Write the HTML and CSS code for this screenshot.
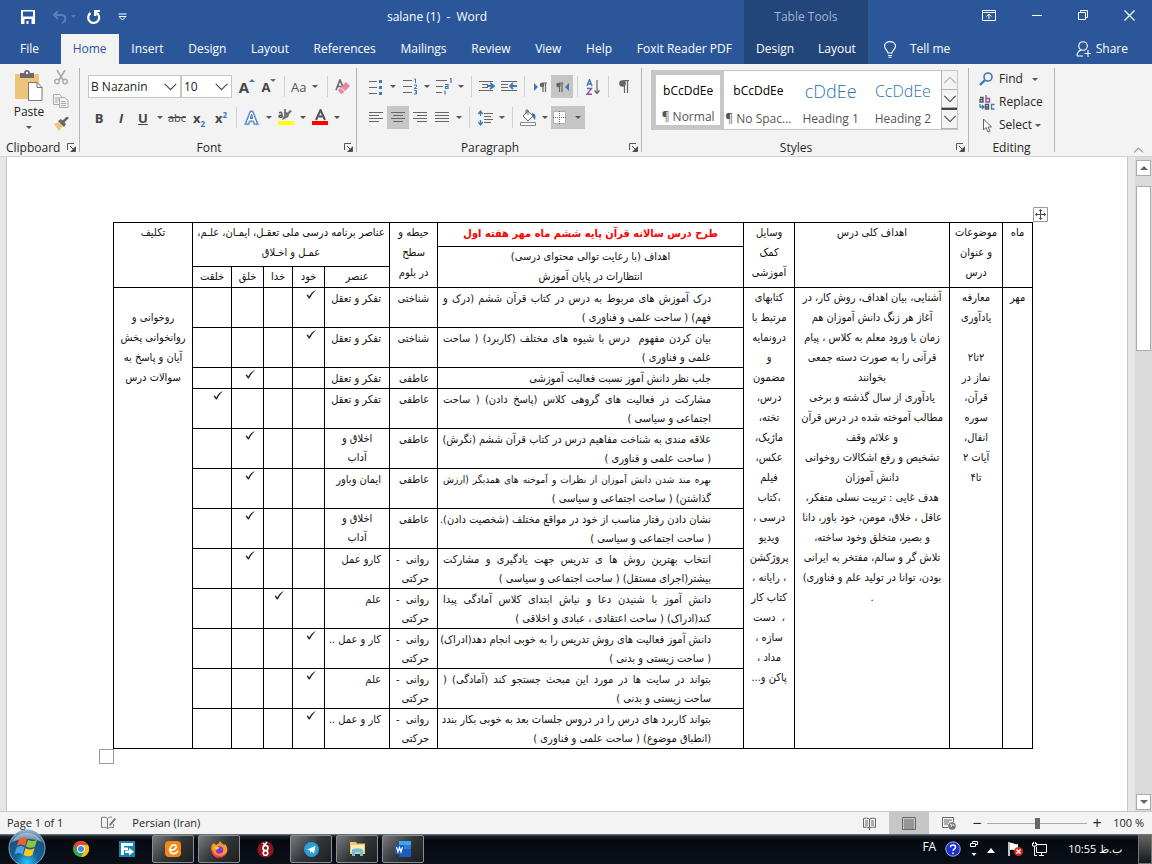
FILE: index.html
```html
<!DOCTYPE html>
<html lang="en">
<head>
<meta charset="utf-8">
<title>salane (1) - Word</title>
<link rel="stylesheet" href="styles.css">
</head>
<body>
<svg class="defs" aria-hidden="true">
  <symbol id="launch" viewBox="0 0 9 9"><path d="M.5 7V.5H7M3 3l4 4M8.500 3.500v5h-5" fill="none" stroke="#555"/><path d="M8 4v4H4z" fill="#444"/></symbol>
  <symbol id="chev" viewBox="0 0 16 9"><path d="M1.500 1L8 7.500 14.500 1" fill="none" stroke="#444" stroke-width="1.200"/></symbol>
  <symbol id="check" viewBox="0 0 10 9"><path d="M.5 5l1.300-.6 1.500 2.100C4.800 3.800 6.500 1.700 9.300.3L9.500.7C7.200 2.600 5.500 5 4 8.200L2.900 8.400z" fill="#222"/></symbol>
</svg>

<header class="top">
  <div class="quick">
    <div class="qat">
      <button aria-label="Save"><svg width="14" height="14" viewBox="0 0 14 14"><path d="M0 0h14v14H0zM2 1.500v5h10v-5zM3.500 9v5h2v-3h2v3h3V9z" fill="#fff" fill-rule="evenodd"/></svg></button>
      <button aria-label="Undo"><svg width="25" height="14" viewBox="0 0 25 14"><path d="M6 1L2 5l4 4M2.500 5H9c5 0 6 6 1 8" fill="none" stroke="#5b7fb8" stroke-width="2"/><path d="M19 5h5l-2.500 3z" fill="#5b7fb8"/></svg></button>
      <button aria-label="Repeat"><svg width="15" height="15" viewBox="0 0 15 15"><path d="M4.500 3A5.500 5.500 0 1 0 10 2.500" fill="none" stroke="#fff" stroke-width="2.200"/><path d="M8 0h6v2h-3.500v4H8z" fill="#fff"/></svg></button>
      <button aria-label="Customize"><svg width="9" height="8" viewBox="0 0 9 8"><path d="M.5 1h8M1 3.500h7L4.500 7z" fill="none" stroke="#fff"/></svg></button>
    </div>
    <div class="title">salane (1)&nbsp; -&nbsp; Word</div>
  </div>
  <div class="ctx ctx-title">Table Tools</div>
  <div class="wins">
    <button aria-label="Ribbon options"><svg width="14" height="11" viewBox="0 0 14 11"><path d="M.5.5h13v10H.5zM.5 2.500h13M7 9V4M4.500 6.500L7 4l2.500 2.500" fill="none" stroke="#fff"/></svg></button>
    <button aria-label="Minimize"><svg width="10" height="11" viewBox="0 0 10 11"><path d="M0 5.500h10" stroke="#fff"/></svg></button>
    <button aria-label="Restore"><svg width="10" height="10" viewBox="0 0 10 10"><path d="M.5 2.500h7v7h-7zM2.500 2.500v-2h7v7h-2" fill="none" stroke="#fff"/></svg></button>
    <button aria-label="Close"><svg width="11" height="11" viewBox="0 0 11 11"><path d="M.5.5l10 10M10.500.5l-10 10" stroke="#fff" stroke-width="1.200"/></svg></button>
  </div>
  <nav class="tabs">
    <button class="file">File</button><button class="on">Home</button><button>Insert</button><button>Design</button><button>Layout</button><button>References</button><button>Mailings</button><button>Review</button><button>View</button><button>Help</button><button>Foxit Reader PDF</button>
  </nav>
  <nav class="ctx ctx-tabs"><button>Design</button><button>Layout</button></nav>
  <div class="tell">
    <button><svg width="12" height="17" viewBox="0 0 12 17"><path d="M4 12c0-2.500-3.500-3.500-3.500-7C.5 2.500 3 .6 6 .6s5.500 1.900 5.500 4.400c0 3.500-3.500 4.500-3.500 7zM4 14.500h4M4.500 16.300h3" fill="none" stroke="#fff" stroke-width="1.100"/></svg>Tell me</button>
    <button><svg width="16" height="16" viewBox="0 0 16 16"><circle cx="7" cy="5" r="4.300" fill="none" stroke="#fff" stroke-width="1.100"/><path d="M1 15c0-3 1.500-5 4-6M1 15h6M12 9v7M8.500 12.500H15" fill="none" stroke="#fff" stroke-width="1.100"/></svg>Share</button>
  </div>
</header>

<section class="ribbon">
  <div class="group g-clip">
    <div class="body">
      <button class="paste"><svg width="30" height="32" viewBox="0 0 30 32"><path d="M1 4h24v25H1z" fill="#ecc57b"/><path d="M6 3h4c0-4 6-4 6 0h4v5H6z" fill="#6a6a6a"/><circle cx="13" cy="3" r="1.200" fill="#f3f3f3"/><path d="M14.500 12.500h8.500l5 5v13H14.500z" fill="#fff" stroke="#777"/><path d="M23 12.500v5h5" fill="none" stroke="#777"/></svg><span>Paste</span><i class="tri"></i></button>
      <div class="stack">
        <button aria-label="Cut"><svg width="14" height="15" viewBox="0 0 14 15"><path d="M3 0l6 10M11 0L5 10" stroke="#aaa" stroke-width="1.700"/><circle cx="3" cy="11.500" r="2.300" fill="none" stroke="#aaa" stroke-width="1.400"/><circle cx="11" cy="11.500" r="2.300" fill="none" stroke="#aaa" stroke-width="1.400"/></svg></button>
        <button aria-label="Copy"><svg width="16" height="14" viewBox="0 0 16 14"><g fill="#f3f3f3" stroke="#aaa"><path d="M.5.5h6l2 2v8h-8z"/><path d="M6.500 3.500h5.500l3 3v7H6.500z"/></g><path d="M2 4h4M2 6h4M2 8h3M8 7.500h4M8 9.500h5M8 11.500h5" stroke="#aaa"/></svg></button>
        <button aria-label="Format Painter"><svg width="16" height="14" viewBox="0 0 16 14"><path d="M1 7l5-2 4 4-4 5z" fill="#ecc57b"/><path d="M5 4l3-2 5 5-2 3z" fill="#666"/><path d="M10 5l5-5" stroke="#666" stroke-width="2.500"/></svg></button>
      </div>
    </div>
    <div class="cap"><span>Clipboard</span><svg width="9" height="9"><use href="#launch"/></svg></div>
  </div>

  <div class="group g-font">
    <div class="body rows">
      <div class="row">
        <div class="combo wide"><select aria-label="Font"><option>B Nazanin</option></select><svg width="15" height="8"><use href="#chev"/></svg></div>
        <div class="combo"><select aria-label="Font size"><option>10</option></select><svg width="15" height="8"><use href="#chev"/></svg></div>
        <button class="ib glyph" aria-label="Grow font"><b class="big">A</b><i class="up"></i></button>
        <button class="ib glyph" aria-label="Shrink font"><b>A</b><i class="dn"></i></button>
        <i class="sep"></i>
        <button class="case">Aa<i class="tri"></i></button>
        <i class="sep"></i>
        <button class="ib" aria-label="Clear formatting"><svg width="16" height="16" viewBox="0 0 16 16"><path d="M1 11L5 1l4 9M2.500 7.500h5" fill="none" stroke="#666" stroke-width="1.600"/><path d="M11 3l4 4-5 5-4-4z" fill="#e8889c"/><path d="M5.300 8.700l4 4-2 2H6l-2.700-2.700V10.700z" fill="#e8889c"/></svg></button>
      </div>
      <div class="row">
        <button class="ib glyph"><b>B</b></button>
        <button class="ib glyph it"><b>I</b></button>
        <button class="ib glyph"><b><u>U</u></b></button><i class="tri"></i>
        <button class="ib glyph st"><s>abc</s></button>
        <button class="ib glyph"><b>x<sub>2</sub></b></button>
        <button class="ib glyph"><b>x<sup>2</sup></b></button>
        <i class="sep"></i>
        <button class="ib" aria-label="Text effects"><svg width="16" height="16" viewBox="0 0 16 16"><path d="M1.500 14L6.500 1.500h2l5 12.500h-3L9.500 11H5.500l-1 3zM6.300 8.500h2.500L7.500 4.500z" fill="#fff" fill-rule="evenodd" stroke="#9cc0e6" stroke-width="2.600"/><path d="M1.500 14L6.500 1.500h2l5 12.500h-3L9.500 11H5.500l-1 3zM6.300 8.500h2.500L7.500 4.500z" fill="#fff" fill-rule="evenodd" stroke="#3d78ba"/></svg></button><i class="tri"></i>
        <button class="ib" aria-label="Highlight"><svg width="18" height="17" viewBox="0 0 18 17"><path d="M2 4c3-2 3 0 3 4-4 1-4-2 0-2M8 0v8c4 1 4-5 0-4" fill="none" stroke="#555" stroke-width="1.500"/><path d="M15 2L8 10l-3 1 1-3 7-7z" fill="#777"/><path d="M1 12h16v4H1z" fill="#ff0"/></svg></button><i class="tri"></i>
        <button class="ib" aria-label="Font color"><svg width="17" height="17" viewBox="0 0 17 17"><path d="M4 11L8.500 1 13 11M5.500 7.500h6" fill="none" stroke="#555" stroke-width="2"/><path d="M0 12h16v4H0z" fill="#f00"/></svg></button><i class="tri"></i>
      </div>
    </div>
    <div class="cap"><span>Font</span><svg width="9" height="9"><use href="#launch"/></svg></div>
  </div>

  <div class="group g-para">
    <div class="body rows">
      <div class="row">
        <button class="ib" aria-label="Bullets"><svg width="14" height="16" viewBox="0 0 14 16"><path d="M0 2.500h8M0 8.500h8M0 14.500h8" stroke="#666"/><path d="M10 1h3v3h-3zM10 7h3v3h-3zM10 13h3v3h-3z" fill="#3d78ba"/></svg></button><i class="tri"></i>
        <button class="ib" aria-label="Numbering"><svg width="15" height="17" viewBox="0 0 15 17"><path d="M0 2.500h9M0 8.500h9M0 14.500h9" stroke="#666"/><path d="M11 1h1.500v4M11 7h2.500v1.500L11 10.500h3M11 12.500h2.500v3.500H11M12 14.300h1.500" fill="none" stroke="#3d78ba"/></svg></button><i class="tri"></i>
        <button class="ib" aria-label="Multilevel list"><svg width="17" height="17" viewBox="0 0 17 17"><path d="M0 2.500h11M0 8.500h7M0 14.500h6" stroke="#666"/><path d="M14 0.500h1V5M9 6.500h3v4H9.500v-2H12M9 12.500v4" fill="none" stroke="#3d78ba" stroke-width="1.200"/></svg></button><i class="tri"></i>
        <i class="sep"></i>
        <button class="ib" aria-label="Decrease indent"><svg width="16" height="13" viewBox="0 0 16 13"><path d="M0 1.500h14M3 4.500h6M3 7.500h6M0 10.500h14" stroke="#666"/><path d="M8 6h6M11 3l4 3-4 3" fill="none" stroke="#3d78ba" stroke-width="1.800"/></svg></button>
        <button class="ib" aria-label="Increase indent"><svg width="16" height="13" viewBox="0 0 16 13"><path d="M0 1.500h16M0 4.500h7M0 7.500h7M0 10.500h16" stroke="#666"/><path d="M9 6h7M12 3L9 6l3 3" fill="none" stroke="#3d78ba" stroke-width="1.800"/></svg></button>
        <i class="sep"></i>
        <button class="ib" aria-label="Left to right"><svg width="13" height="10" viewBox="0 0 13 10"><path d="M0 1l4 4-4 4z" fill="#3d78ba"/><path d="M9 1v9M11.500 1v9M8 1h5" stroke="#666" stroke-width="1.200"/><circle cx="8" cy="3" r="2.300" fill="#666"/></svg></button>
        <button class="ib sel" aria-label="Right to left"><svg width="13" height="10" viewBox="0 0 13 10"><path d="M13 1L9 5l4 4z" fill="#3d78ba"/><path d="M3.500 1v9M6 1v9M3 1h4.500" stroke="#666" stroke-width="1.200"/><circle cx="2.500" cy="3" r="2.300" fill="#666"/></svg></button>
        <i class="sep"></i>
        <button class="ib" aria-label="Sort"><svg width="14" height="16" viewBox="0 0 14 16"><path d="M1 7l2.500-6.500L6 7M2 5h3" fill="none" stroke="#3d78ba" stroke-width="1.400"/><path d="M1 9.500h4.500L1 15.300h5" fill="none" stroke="#8a55a8" stroke-width="1.400"/><path d="M11 1v13M8.500 11.500L11 14.500l2.500-3" fill="none" stroke="#666" stroke-width="1.200"/></svg></button>
        <i class="sep"></i>
        <button class="ib" aria-label="Show marks"><svg width="10" height="13" viewBox="0 0 10 13"><path d="M5.500 0v13M8.500 0v13M4 .6h6" stroke="#666" stroke-width="1.200"/><circle cx="3.500" cy="3.500" r="3.300" fill="#666"/></svg></button>
      </div>
      <div class="row">
        <button class="ib" aria-label="Align left"><svg width="14" height="11" viewBox="0 0 14 11"><path d="M0 .5h14M0 3.500h10M0 6.500h14M0 9.500h10" stroke="#666"/></svg></button>
        <button class="ib sel" aria-label="Center"><svg width="14" height="11" viewBox="0 0 14 11"><path d="M0 .5h14M2 3.500h10M0 6.500h14M2 9.500h10" stroke="#666"/></svg></button>
        <button class="ib" aria-label="Align right"><svg width="14" height="11" viewBox="0 0 14 11"><path d="M0 .5h14M4 3.500h10M0 6.500h14M4 9.500h10" stroke="#666"/></svg></button>
        <button class="ib" aria-label="Justify"><svg width="14" height="11" viewBox="0 0 14 11"><path d="M0 .5h14M0 3.500h14M0 6.500h14M0 9.500h14" stroke="#666"/></svg></button><i class="tri"></i>
        <i class="sep"></i>
        <button class="ib" aria-label="Line spacing"><svg width="15" height="16" viewBox="0 0 15 16"><path d="M6 3.500h9M6 6.500h7M6 9.500h9M6 12.500h7" stroke="#666"/><path d="M2.500 1v5M2.500 15v-5M.3 4l2.200-3 2.200 3M.3 12l2.200 3 2.200-3" fill="none" stroke="#3d78ba" stroke-width="1.300"/></svg></button><i class="tri"></i>
        <i class="sep"></i>
        <button class="ib" aria-label="Shading"><svg width="17" height="17" viewBox="0 0 17 17"><path d="M3 7l5-5 5 5-5 5z" fill="#fff" stroke="#666"/><path d="M6 5V1h2v5" fill="none" stroke="#666"/><path d="M12 4c4 1 4 3 3 7-2-1-1-3-3-4z" fill="#3d78ba"/><path d="M.5 13.500h15v3H.5z" fill="#fff" stroke="#888"/></svg></button><i class="tri"></i>
        <button class="ib sel two" aria-label="Borders"><svg width="13" height="13" viewBox="0 0 13 13"><path d="M0 0h13v13H0z" fill="#fff"/><path d="M.5.5h12v12H.5zM6.500 0v13M0 6.500h13" fill="none" stroke="#666" stroke-dasharray="1 1"/></svg><i class="tri"></i></button>
      </div>
    </div>
    <div class="cap"><span>Paragraph</span><svg width="9" height="9"><use href="#launch"/></svg></div>
  </div>

  <div class="group g-style">
    <div class="gallery">
      <button class="st-item cur"><span class="demo">bCcDdEe</span><span>¶ Normal</span></button>
      <button class="st-item"><span class="demo">bCcDdEe</span><span>¶ No Spac...</span></button>
      <button class="st-item"><span class="demo h1">cDdEe</span><span>Heading 1</span></button>
      <button class="st-item"><span class="demo h2">CcDdEe</span><span>Heading 2</span></button>
      <div class="gscroll">
        <button class="dim" aria-label="Up"><svg class="flip" width="14" height="8"><use href="#chev"/></svg></button>
        <button aria-label="Down"><svg width="14" height="8"><use href="#chev"/></svg></button>
        <button class="more" aria-label="More"><svg width="14" height="8"><use href="#chev"/></svg></button>
      </div>
    </div>
    <div class="cap"><span>Styles</span><svg width="9" height="9"><use href="#launch"/></svg></div>
  </div>

  <div class="group g-edit">
    <div class="edits">
      <button><svg width="16" height="14" viewBox="0 0 16 14"><circle cx="9" cy="5" r="4" fill="none" stroke="#3d78ba" stroke-width="1.600"/><path d="M6 8l-5 5" stroke="#3d78ba" stroke-width="2.400"/></svg>Find<i class="tri wide"></i></button>
      <button><svg width="16" height="15" viewBox="0 0 16 15"><path d="M1 2.500h3V7H1V4.500h3M6.500 13V9.500h3V14h-3v-2h3" fill="none" stroke="#555" stroke-width="1.400"/><path d="M7 0v7h3.500V3.500H7" fill="none" stroke="#8a55a8" stroke-width="1.400"/><path d="M15.500 9.500h-3V14h3M1 9v3h4M3 10l2 2-2 2" fill="none" stroke="#3d78ba" stroke-width="1.300"/></svg>Replace</button>
      <button><svg width="16" height="15" viewBox="0 0 16 15"><path d="M4.500 1v11l2.500-2.500 2 4.500 2-1-2-4h3.500z" fill="#fff" stroke="#666"/></svg>Select<i class="tri"></i></button>
    </div>
    <div class="cap"><span>Editing</span></div>
  </div>
  <button class="collapse" aria-label="Collapse"><svg class="flip" width="11" height="6"><use href="#chev"/></svg></button>
</section>

<main class="work">
  <div class="paper">
    <div class="sheet">
    <span class="handle"><svg width="15" height="15" viewBox="0 0 15 15"><path d="M.5.5h14v14H.5z" fill="#fff" stroke="#999"/><path d="M7.500 3v9M3 7.500h9" stroke="#444"/><path d="M5.500 4l2-2 2 2zM5.500 11l2 2 2-2zM4 5.500l-2 2 2 2zM11 5.500l2 2-2 2z" fill="#444"/></svg></span>
    <table dir="rtl" lang="fa">
      <colgroup><col class="c30"><col class="c53"><col class="c155"><col class="c51"><col class="c306"><col class="c48"><col class="c65"><col class="c32"><col class="c29"><col class="c32"><col class="c39"><col class="c79"></colgroup>
      <tbody>
      <tr class="r24"><td rowspan="3">ماه</td><td rowspan="3">موضوعات<br>و عنوان<br>درس</td><td rowspan="3">اهداف کلی درس</td><td rowspan="3">وسایل<br>کمک<br>آموزشی</td><th>طرح درس سالانه قرآن پایه ششم ماه مهر هفته اول</th><td rowspan="3">حیطه و<br>سطح<br>در بلوم</td><td rowspan="2" colspan="5">عناصر برنامه درسی ملی تعقـل، ایمـان، علـم،<br>عمـل و اخـلاق</td><td rowspan="3">تکلیف</td></tr>
      <tr class="r20"><td rowspan="2">اهداف (با رعایت توالی محتوای درسی)<br>انتظارات در پایان آموزش</td></tr>
      <tr class="r20"><td>عنصر</td><td>خود</td><td>خدا</td><td>خلق</td><td>خلقت</td></tr>
      <tr><td rowspan="12">مهر</td>
        <td rowspan="12">معارفه<br>یادآوری<br><br>۲تا۲<br>نماز در<br>قرآن،<br>سوره<br>انفال،<br>آیات ۲<br>تا۴</td>
        <td rowspan="12">آشنایی، بیان اهداف، روش کار، در<br>آغاز هر زنگ دانش آموزان هم<br>زمان با ورود معلم به کلاس ، پیام<br>قرآنی را به صورت دسته جمعی<br>بخوانند<br>یادآوری از سال گذشته و برخی<br>مطالب آموخته شده در درس قرآن<br>و علائم وقف<br>تشخیص و رفع اشکالات روخوانی<br>دانش آموزان<br>هدف غایی : تربیت نسلی متفکر،<br>عاقل ، خلاق، مومن، خود باور، دانا<br>و بصیر، متخلق وخود ساخته،<br>تلاش گر و سالم، مفتخر به ایرانی<br>بودن، توانا در تولید علم و فناوری)<br>.</td>
        <td rowspan="12">کتابهای<br>مرتبط با<br>درونمایه<br>و<br>مضمون<br>درس،<br>تخته،<br>ماژیک،<br>عکس،<br>فیلم<br>،کتاب<br>درسی ،<br>ویدیو<br>پروژکشن<br>، رایانه ،<br>کتاب کار<br>، &nbsp;دست<br>سازه ،<br>مداد ،<br>پاکن و...</td>
        <td class="obj"><p class="full">درک آموزش های مربوط به درس در کتاب قرآن ششم (درک و</p><p>فهم) ( ساحت علمی و فناوری )</p></td><td class="dom">شناختی</td><td class="el">تفکر و تعقل</td><td class="ck"><svg><use href="#check"/></svg></td><td></td><td></td><td></td>
        <td rowspan="12"><br>روخوانی و<br>روانخوانی پخش<br>آیان و پاسخ به<br>سوالات درس</td></tr>
      <tr><td class="obj"><p class="full">بیان کردن مفهوم &nbsp;درس با شیوه های مختلف (کاربرد) ( ساحت</p><p>علمی و فناوری )</p></td><td class="dom">شناختی</td><td class="el">تفکر و تعقل</td><td class="ck"><svg><use href="#check"/></svg></td><td></td><td></td><td></td></tr>
      <tr class="r20"><td class="obj"><p>جلب نظر دانش آموز نسبت فعالیت آموزشی</p></td><td class="dom">عاطفی</td><td class="el">تفکر و تعقل</td><td></td><td></td><td class="ck"><svg><use href="#check"/></svg></td><td></td></tr>
      <tr><td class="obj"><p class="full">مشارکت در فعالیت های گروهی کلاس (پاسخ دادن) ( ساحت</p><p>اجتماعی و سیاسی )</p></td><td class="dom">عاطفی</td><td class="el">تفکر و تعقل</td><td></td><td></td><td></td><td class="ck"><svg><use href="#check"/></svg></td></tr>
      <tr><td class="obj"><p class="full">علاقه مندی به شناخت مفاهیم درس در کتاب قرآن ششم (نگرش)</p><p>( ساحت علمی و فناوری )</p></td><td class="dom">عاطفی</td><td class="pair">اخلاق و<br>آداب</td><td></td><td></td><td class="ck"><svg><use href="#check"/></svg></td><td></td></tr>
      <tr><td class="obj"><p class="full long">بهره مند شدن دانش آموزان از نظرات و آموخته های همدیگر (ارزش</p><p>گذاشتن) ( ساحت اجتماعی و سیاسی )</p></td><td class="dom">عاطفی</td><td class="el">ایمان وباور</td><td></td><td></td><td class="ck"><svg><use href="#check"/></svg></td><td></td></tr>
      <tr><td class="obj"><p class="full">نشان دادن رفتار مناسب از خود در مواقع مختلف (شخصیت دادن).</p><p>( ساحت اجتماعی و سیاسی )</p></td><td class="dom">عاطفی</td><td class="pair">اخلاق و<br>آداب</td><td></td><td></td><td class="ck"><svg><use href="#check"/></svg></td><td></td></tr>
      <tr><td class="obj"><p class="full">انتخاب بهترین روش ها ی تدریس جهت یادگیری و مشارکت</p><p>بیشتر(اجرای مستقل) ( ساحت اجتماعی و سیاسی )</p></td><td class="dom"><p class="full">روانی -</p><p>حرکتی</p></td><td class="el">کارو عمل</td><td></td><td></td><td class="ck"><svg><use href="#check"/></svg></td><td></td></tr>
      <tr><td class="obj"><p class="full">دانش آموز با شنیدن دعا و نیاش ابتدای کلاس آمادگی پیدا</p><p>کند(ادراک) ( ساحت اعتقادی ، عبادی و اخلاقی )</p></td><td class="dom"><p class="full">روانی -</p><p>حرکتی</p></td><td class="el">علم</td><td></td><td class="ck"><svg><use href="#check"/></svg></td><td></td><td></td></tr>
      <tr><td class="obj"><p class="full">دانش آموز فعالیت های روش تدریس را به خوبی انجام دهد(ادراک)</p><p>( ساحت زیستی و بدنی )</p></td><td class="dom"><p class="full">روانی -</p><p>حرکتی</p></td><td class="el">کار و عمل ..</td><td class="ck"><svg><use href="#check"/></svg></td><td></td><td></td><td></td></tr>
      <tr><td class="obj"><p class="full">بتواند در سایت ها در مورد این مبحث جستجو کند (آمادگی) (</p><p>ساحت زیستی و بدنی )</p></td><td class="dom"><p class="full">روانی -</p><p>حرکتی</p></td><td class="el">علم</td><td class="ck"><svg><use href="#check"/></svg></td><td></td><td></td><td></td></tr>
      <tr><td class="obj"><p class="full">بتواند کاربرد های درس را در دروس جلسات بعد به خوبی بکار بندد</p><p>(انطباق موضوع) ( ساحت علمی و فناوری )</p></td><td class="dom"><p class="full">روانی -</p><p>حرکتی</p></td><td class="el">کار و عمل ..</td><td class="ck"><svg><use href="#check"/></svg></td><td></td><td></td><td></td></tr>
      </tbody>
    </table>
    <span class="corner"></span>
    </div>
  </div>
  <div class="vbar"><button aria-label="Scroll up"><i class="aup"></i></button><div class="thumb"></div><button aria-label="Scroll down"><i class="adn"></i></button></div>
</main>

<div class="status">
  <span>Page 1 of 1</span>
  <svg width="16" height="14" viewBox="0 0 16 14"><path d="M6.500 12.500C5 11 3 11 .5 11.500V1.500C3 1 5 1 6.500 2.500zM6.500 12.500c1-1 3-1.500 6-1V8M6.500 2.500C7.500 1.500 9 1 11 1" fill="none" stroke="#777"/><path d="M8.500 8l5-6 1.500 1.200-5 6-2 .8z" fill="#777"/></svg>
  <span>Persian (Iran)</span>
  <div class="views">
    <button aria-label="Read mode"><svg width="13" height="13" viewBox="0 0 13 13"><path d="M.5 1.500c2-.6 4-.4 6 .5 2-.9 4-1.100 6-.5v9c-2-.6-4-.4-6 .5-2-.9-4-1.100-6-.5zM6.500 2v11M2 4h3M2 6h3M2 8h3M8 4h3M8 6h3M8 8h3" fill="none" stroke="#666"/></svg></button>
    <button class="sel" aria-label="Print layout"><svg width="14" height="13" viewBox="0 0 14 13"><path d="M.5.500h13v12H.5zM2 3h10M2 5h10M2 7h10M2 9h10M2 11h10" fill="none" stroke="#666"/></svg></button>
    <button aria-label="Web layout"><svg width="14" height="13" viewBox="0 0 14 13"><path d="M6 10.500H.5V.5h11V5M2 3h8M2 5h5M2 7h4" fill="none" stroke="#666"/><circle cx="10" cy="9" r="3.800" fill="#777"/><path d="M8 7l2 1-1 2M11 7l1 2" stroke="#f3f3f3" fill="none"/></svg></button>
  </div>
  <div class="zoom"><button aria-label="Zoom out">−</button><input type="range" min="0" max="200" value="100" aria-label="Zoom"><button aria-label="Zoom in">+</button><span>100 %</span></div>
</div>

<footer class="taskbar">
  <button class="orb" aria-label="Start"><svg width="38" height="36" viewBox="0 0 38 36"><defs><radialGradient id="og" cx=".5" cy=".9" r=".9"><stop offset="0" stop-color="#2cf"/><stop offset=".35" stop-color="#16649c"/><stop offset=".75" stop-color="#1f4f7c"/><stop offset="1" stop-color="#9cc3dc"/></radialGradient></defs><circle cx="19" cy="19" r="18" fill="url(#og)" stroke="#7fa8c0"/><path d="M4 13a16 14 0 0 1 30 0c-8-4-22-4-30 0z" fill="#fff" opacity=".4"/><path d="M11 10c3-2 5-2 8 0l-2 7c-3-2-5-2-8 0z" fill="#ee6030"/><path d="M20 10.500c3 2 6 2 9 0l-2 7c-3 2-6 1.500-9 0z" fill="#90c43c"/><path d="M8.500 18.500c3-2 5-2 8 0l-2 7c-3-2-5-2-8 0z" fill="#4aa0e8"/><path d="M17.500 19c3 2 6 2 9 0l-2 7c-3 2-6 1.500-9 0z" fill="#fcc81c"/></svg></button>
  <div class="apps">
    <button aria-label="Chrome"><svg width="16" height="16" viewBox="0 0 16 16"><circle cx="8" cy="8" r="8" fill="#34a853"/><path d="M1 4a8 8 0 0 1 14 0H8a4 4 0 0 0-3.500 6z" fill="#ea4335"/><path d="M15 4a8 8 0 0 1-7 12l3.500-6A4 4 0 0 0 8 4z" fill="#fbbc05"/><circle cx="8" cy="8" r="4" fill="#fff"/><circle cx="8" cy="8" r="3" fill="#4285f4"/></svg></button>
    <button aria-label="File transfer"><svg width="16" height="16" viewBox="0 0 16 16"><path d="M0 0h16v16H0z" fill="#0e86ba"/><path d="M2 2h12v3H5v1.500h4V9H5v5H2z" fill="#fff"/><path d="M6 9.500h4V7l5 3.800-5 3.700V12H6z" fill="#fff"/></svg></button>
    <button class="open" aria-label="Browser"><svg width="16" height="16" viewBox="0 0 16 16"><rect width="16" height="16" rx="4" fill="#f68712"/><path d="M4 9c6 1 9-3 6-5-3-1-6 3-5 6 1 4 6 3 8 0" fill="none" stroke="#fff" stroke-width="1.800"/></svg></button>
    <button class="open" aria-label="Firefox"><svg width="17" height="17" viewBox="0 0 17 17"><path d="M1 4l2-2 2 2c2-1 3-2 4-4 1 2 3 3 4 4l1-1c2 2 3 5 2 8a8 7 0 0 1-15 0C0 8 0 6 1 4z" fill="#ff9824"/><path d="M1 6a8 8 0 0 0 14 6c-2 7-13 6-14-1z" fill="#ff3b50"/><circle cx="8.500" cy="9" r="3.800" fill="#8438d8"/><path d="M3 6c2-1 4 0 6 1-2 0-2 1-4 2z" fill="#ffd43a"/></svg></button>
    <button aria-label="Reader"><svg width="17" height="17" viewBox="0 0 17 17"><circle cx="8.500" cy="8.500" r="8.200" fill="#8c1820"/><circle cx="8.500" cy="7" r="2.500" fill="none" stroke="#fff" stroke-width="1.600"/><circle cx="8.500" cy="12" r="2.300" fill="none" stroke="#fff" stroke-width="1.600"/><path d="M7 5l3-4M6 2l2 2" stroke="#fff" stroke-width="1.500"/></svg></button>
    <button class="open" aria-label="Telegram"><svg width="15" height="15" viewBox="0 0 15 15"><circle cx="7.500" cy="7.500" r="7.500" fill="#2a9fd8"/><path d="M3 7.500L11.500 4 10 11.500 7.500 9.500 6 11V8.500z" fill="#fff"/></svg></button>
    <button class="open" aria-label="Explorer"><svg width="17" height="16" viewBox="0 0 17 16"><path d="M1 1h6l1 1.500h8V13H1z" fill="#e8cc6c"/><path d="M2 4h13v7H2z" fill="#fbeeb0"/><path d="M3 15V9c0-2 11-2 11 0v6h-3v-4H6v4z" fill="#6cbce4"/></svg></button>
    <button class="open" aria-label="Word"><svg width="16" height="16" viewBox="0 0 16 16"><path d="M4 0h12v16H4z" fill="#1b5cbd"/><path d="M4 0h12v4H4z" fill="#41a5ee"/><path d="M4 4h12v4H4z" fill="#2b7cd3"/><path d="M0 4h9v9H0z" fill="#185abd"/><path d="M1.500 6l1.500 5 1.500-4.500L6 11l1.500-5" fill="none" stroke="#fff" stroke-width="1.200"/></svg></button>
  </div>
  <div class="tray">
    <span class="fa">FA</span>
    <svg width="16" height="16" viewBox="0 0 16 16"><circle cx="8" cy="8" r="7.200" fill="#1c2fd0" stroke="#aab4e8"/><path d="M5.500 6.200c0-3 5-3 5 0 0 2-2.500 1.800-2.500 3.800M8 11.500v1.500" fill="none" stroke="#fff" stroke-width="1.600"/></svg>
    <svg width="8" height="16" viewBox="0 0 8 16"><path d="M.5 2.500h5v3h-5zM2.500 2V.5h5v3H6" fill="none" stroke="#fff"/><path d="M1.500 12h5L4 15z" fill="#fff"/></svg>
    <svg width="8" height="8" viewBox="0 0 8 8"><path d="M0 8h8L4 3z" fill="#fff"/></svg>
    <svg class="flag" width="15" height="14" viewBox="0 0 15 14"><path d="M1 0v14" stroke="#fff" stroke-width="1.500"/><path d="M2 1c3-1 4 2 8 1v6c-4 1-5-1-8 0z" fill="#fff"/><circle cx="10.500" cy="9.500" r="4.500" fill="#d8281c"/><path d="M8.500 7.500l4 4M12.500 7.500l-4 4" stroke="#fff" stroke-width="1.400"/></svg>
    <svg width="15" height="14" viewBox="0 0 15 14"><path d="M5 2.500h9.500v8H4.500V5M7 13.500h5M9.500 11v2M.5 1v3h4V1M2.500 4v9.500H5M1.500 0v2M3.500 0v2" fill="none" stroke="#fff"/></svg>
    <span class="clock" dir="rtl" lang="fa">ب.ظ 10:55</span>
    <button class="desk" aria-label="Show desktop"></button>
  </div>
</footer>
</body>
</html>
```
FILE: styles.css
```css
* { box-sizing: border-box; }
body { margin: 0; min-height: 100vh; display: flex; flex-direction: column; font: 12px/16px "Open Sans", "Noto Sans", sans-serif; color: #262626; background: #e6e6e6; }
button { border: 0; padding: 0; margin: 0; background: none; font: inherit; color: inherit; display: flex; align-items: center; justify-content: center; }
svg { display: block; flex: none; }
.defs { position: absolute; width: 0; height: 0; }
p { margin: 0; }
.tri { flex: none; width: 12px; display: flex; justify-content: center; }
.tri::before { content: ""; border: 3px solid transparent; border-top-color: #555; border-bottom: 0; }

.top { display: grid; grid-template-columns: minmax(744px, auto) auto 1fr; grid-template-rows: 34px 30px; background: #2b579a; color: #fff; }
.quick { display: flex; align-items: center; }
.qat { display: flex; align-items: center; gap: 17px; width: 130px; padding-left: 21px; }
.title { flex: 1; text-align: center; }
.qat button:nth-child(3) { margin-left: -8px; }
.ctx { background: #22457a; }
.ctx-title { display: flex; align-items: center; justify-content: center; color: #a3b5d0; }
.ctx-tabs { display: flex; }
.wins { display: flex; justify-content: flex-end; align-items: center; padding: 0 17px 4px 0; gap: 36px; }
.tabs { display: flex; justify-content: space-between; }
.tabs button, .ctx-tabs button { padding: 0 12px; }
.tabs .file { padding: 0 21px 0 20px; }
.tabs .on { background: #f3f3f3; color: #2b579a; }
.tell { display: flex; justify-content: space-between; padding: 0 24px 0 16px; }
.tell button { gap: 14px; }
.tell button:last-child { gap: 4px; }

.ribbon { display: flex; height: 93px; background: #f3f3f3; border-bottom: 1px solid #d2d2d2; padding-top: 4px; }
.group { position: relative; display: flex; flex-direction: column; justify-content: space-between; border-right: 1px solid #b5b5b5; margin-bottom: 4px; padding: 0 8px; }
.g-clip { width: 80px; }
.g-font { width: 277px; }
.g-para { width: 285px; }
.g-style { width: 327px; }
.g-edit { width: 86px; }
.cap { display: flex; align-items: center; height: 9px; }
.cap span { flex: 1; text-align: center; padding-right: 14px; }
.cap svg { margin-right: -5px; }
.body { display: flex; }
.rows { flex-direction: column; gap: 8px; padding-top: 7px; }
.row { display: flex; align-items: center; height: 23px; }
.paste { flex-direction: column; width: 42px; }
.paste svg { margin-top: 2px; }
.paste span { line-height: 20px; }
.paste .tri { height: 10px; align-items: center; }
.stack { display: flex; flex-direction: column; gap: 8px; padding: 2px 0 0 3px; }
.stack button { height: 15px; width: 16px; }
.g-clip .cap span { text-align: left; margin-left: -2px; padding: 0; }
.g-edit .cap span { padding: 0; }
.combo { position: relative; flex: none; width: 51px; height: 23px; }
.combo.wide { width: 93px; }
.combo + .ib { margin-left: 4px; }
.combo select { appearance: none; width: 100%; height: 100%; border: 1px solid #c6c6c6; border-radius: 0; background: #fff; font: inherit; color: #222; padding: 0 2px; }
.combo svg { position: absolute; right: 3px; top: 8px; }
.ib { position: relative; flex: none; width: 22px; height: 23px; color: #444; }
.sel { background: #c6c6c6; }
.two { width: 34px; gap: 6px; }
.glyph { font-size: 13px; }
.glyph .big { font-size: 15px; }
.it { font-style: italic; }
.st { font-size: 11px; }
.glyph sub, .glyph sup { font-size: 8px; line-height: 0; color: #3d78ba; }
.up, .dn { align-self: flex-start; margin-top: 4px; border: 3px solid transparent; }
.up { border-bottom-color: #3d78ba; border-top: 0; }
.dn { border-top-color: #3d78ba; border-bottom: 0; }
.sep { flex: none; width: 1px; height: 21px; margin: 0 4px; background: #d0d0d0; }
.case { font-size: 13px; color: #555; gap: 3px; padding: 0 2px; }

.gallery { display: grid; grid-template-columns: repeat(4, 1fr) 16px; height: 60px; margin: 2px 2px 0 1px; border: 1px solid #c6c6c6; background: #fff; }
.st-item { flex-direction: column; justify-content: space-between; padding: 12px 4px 2px 0; min-width: 0; color: #555; white-space: nowrap; }
.cur { border: 4px solid #c6c6c6; padding: 8px 0 0; }
.demo { color: #000; }
.h1 { font-size: 18px; color: #2e74b5; font-weight: 300; }
.h2 { font-size: 16px; color: #2e74b5; font-weight: 300; }
.gscroll { display: flex; flex-direction: column; background: #f3f3f3; }
.gscroll button { flex: 1; border: 1px solid #b0b0b0; border-width: 0 0 1px 1px; }
.gscroll .more { border-top: 2px solid #444; }
.dim svg { opacity: .4; }
.flip { transform: scaleY(-1); }
.edits { display: flex; flex-direction: column; gap: 7px; padding-top: 3px; }
.edits button { justify-content: flex-start; gap: 4px; margin: 0 -6px 0 2px; height: 16px; }
.edits .tri { margin-left: -4px; }
.edits .wide { margin-left: 2px; }
.collapse { margin: auto 8px 3px auto; }

.work { flex: 1; display: flex; border-bottom: 1px solid #c6c6c6; }
.paper { flex: 1; margin: 0 7px 0 6px; background: #fff; border: 1px solid #c6c6c6; border-width: 0 1px; padding: 65px 94px 0 106px; }
.sheet { position: relative; }
.handle { position: absolute; top: -15px; right: -15px; }
.corner { position: absolute; left: -14px; bottom: -15px; width: 15px; height: 15px; border: 1px solid #999; background: #fff; }
table { width: 100%; table-layout: fixed; border-collapse: collapse; font: 11px/20px "DejaVu Sans Condensed", "DejaVu Sans", sans-serif; color: #111; }
td, th { border: 1px solid #000; padding: 0; vertical-align: top; text-align: center; white-space: nowrap; }
th { color: #f00; line-height: 22px; }
tr { height: 40px; }
.r24 { height: 24px; }
.r20 { height: 20px; }
.c30 { width: 30px; } .c53 { width: 53px; } .c155 { width: 155px; } .c51 { width: 51px; } .c306 { width: 306px; } .c48 { width: 48px; }
.c65 { width: 65px; } .c32 { width: 32px; } .c29 { width: 29px; } .c39 { width: 39px; } .c79 { width: 79px; }
.obj, .dom, .el { text-align: right; line-height: 19px; }
.pair { line-height: 19px; }
.obj { padding: 1px 32px 0 5px; }
.dom { padding: 1px 8px 0 6px; }
.el { padding: 1px 8px 0 0; }
.full { text-align: justify; text-align-last: justify; }
.long { font-size: 10px; }
.ck svg { width: 10px; height: 9px; margin: 2px 8px 0 auto; }
.vbar { display: flex; flex-direction: column; width: 17px; padding: 3px 1px 1px; background: #dadada; }
.vbar button { height: 16px; background: #fff; border: 1px solid #ababab; }
.thumb { height: 165px; margin: 10px 0 auto; background: #fff; border: 1px solid #ababab; }
.aup, .adn { border: 4px solid transparent; }
.aup { border-bottom-color: #666; border-top: 0; }
.adn { border-top-color: #666; border-bottom: 0; }

.status { display: flex; align-items: center; height: 22px; background: #f3f3f3; padding: 0 8px 0 7px; font-size: 11px; }
.status > svg { margin: 0 15px 0 38px; }
.views { display: flex; align-self: stretch; margin-left: auto; }
.views button { width: 40px; }
.zoom { display: flex; align-items: center; gap: 4px; margin-left: 2px; }
.zoom button { width: 12px; font-size: 16px; }
.zoom span { margin-left: 6px; }
.zoom input { appearance: none; width: 100px; height: 12px; margin: 0; background: linear-gradient(#aaa, #aaa) center / 100% 1px no-repeat; }
.zoom input::-webkit-slider-thumb { appearance: none; width: 5px; height: 11px; background: #666; }

.taskbar { display: flex; align-items: stretch; height: 30px; background: linear-gradient(#7b8890 0, #1c242b 2px, #060a10 6px, #0a0f18 100%); color: #fff; }
.orb { position: relative; width: 54px; margin-right: 6px; overflow: visible; }
.orb svg { margin-top: -5px; }
.apps { display: flex; gap: 4px; padding-top: 1px; }
.apps button { width: 42px; height: 28px; }
.apps .open { border: 1px solid #8a8e92; border-radius: 2px; background: linear-gradient(135deg, #777a7d, #33373a 50%, #1b1e21); }
.tray { display: flex; align-items: center; margin-left: auto; gap: 9px; }
.fa { margin-top: -4px; }
.flag { margin-left: 4px; }
.clock { margin: 0 7px 0 12px; font-size: 11px; }
.desk { width: 14px; align-self: stretch; border: 1px solid #777; background: linear-gradient(#666, #15181c); }
```
